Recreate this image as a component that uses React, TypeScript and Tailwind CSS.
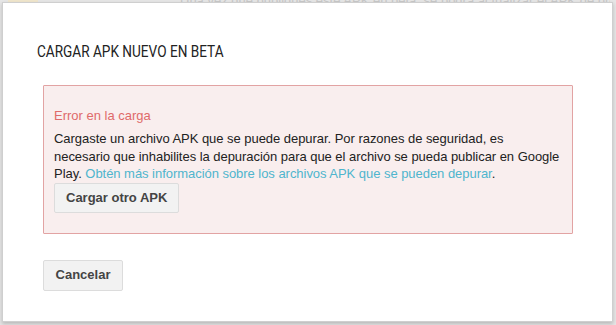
import React from "react";

export default function App() {
  return (
    <div className="relative w-[616px] h-[325px] overflow-hidden bg-[#e6e6e6] pl-[2px] pt-[2px]" style={{ fontFamily: "Arial, 'Liberation Sans', sans-serif" }}>
      <div className="absolute left-[180px] top-[-9px] w-[430px] overflow-hidden whitespace-nowrap text-[13px] text-[#c8c8c8]">
        Una vez que publiques este APK en beta, se podrá actualizar el APK de producción
      </div>
      <div className="absolute left-[8px] top-[-6px] w-[30px] h-[8px] bg-[#f0e6cc]" />
      <div className="relative w-[611px] h-[320px] bg-white border border-[#cfcfcf] shadow-[0_2px_4px_rgba(0,0,0,0.2)] flex flex-col items-start px-[40px]">
        <h1
          className="mt-[37px] -ml-[6px] origin-left scale-x-[0.8] whitespace-nowrap text-[17px] leading-[22px] text-[#222]"
          style={{ fontFamily: "Roboto, 'Liberation Sans', sans-serif" }}
        >
          CARGAR APK NUEVO EN BETA
        </h1>
        <div className="mt-[23px] w-[530px] border border-[#e2a3a3] bg-[#f9eeee] rounded-[1px] pl-[10px] pr-[3px] pt-[21px] pb-[20px]">
          <div className="text-[13px] leading-[18px] text-[#df6a6a]">Error en la carga</div>
          <p className="mt-[5px] whitespace-nowrap text-[13px] leading-[17.5px] tracking-[-0.04px] text-[#222]">
            Cargaste un archivo APK que se puede depurar. Por razones de seguridad, es
            <br />
            necesario que inhabilites la depuración para que el archivo se pueda publicar en Google
            <br />
            Play. <span className="text-[#4fb5cd]">Obtén más información sobre los archivos APK que se pueden depurar</span>.
          </p>
          <button className="h-[30px] px-[11px] rounded-[2px] border border-[#dcdcdc] bg-[#f2f2f2] text-[13px] font-bold text-[#444]">
            Cargar otro APK
          </button>
        </div>
        <button className="mt-[26px] h-[31px] w-[80px] rounded-[2px] border border-[#dcdcdc] bg-[#f2f2f2] text-[13px] font-bold text-[#444]">
          Cancelar
        </button>
      </div>
    </div>
  );
}
